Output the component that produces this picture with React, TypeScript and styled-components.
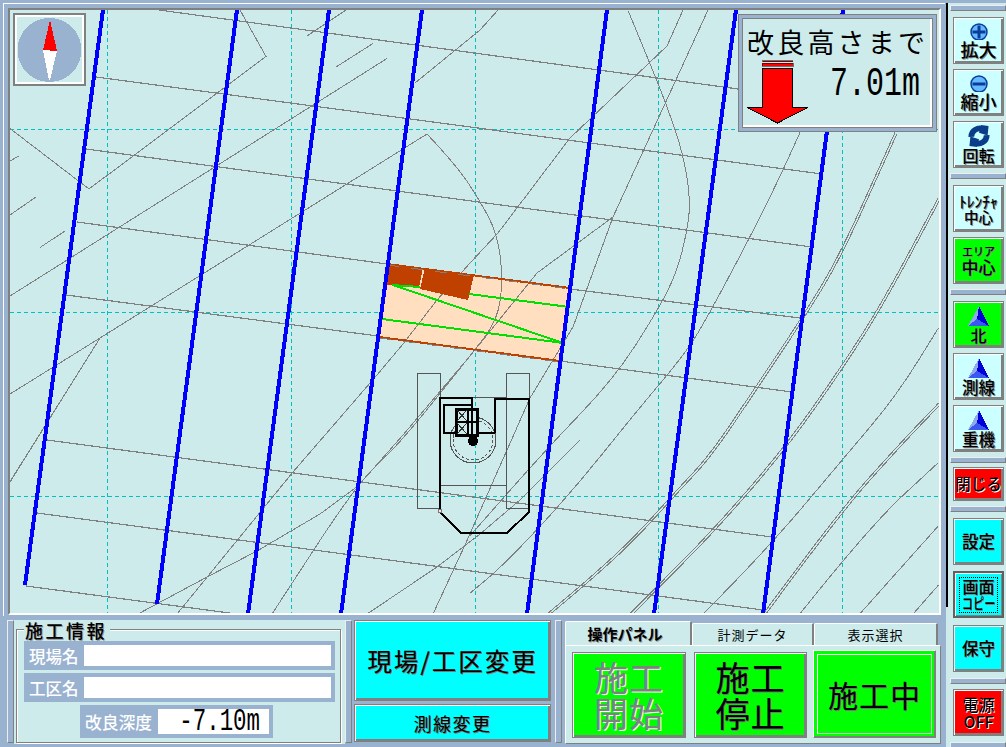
import React from "react";
import styled, { createGlobalStyle, css } from "styled-components";

const BLUE = "#99b2d0";
const PALE = "#cdebeb";
const FONT = `"Noto Sans CJK JP", "Liberation Sans", sans-serif`;

const Global = createGlobalStyle`
  html, body { margin: 0; padding: 0; background: ${BLUE}; overflow: hidden; }
  * { box-sizing: border-box; }
`;

const Page = styled.div`
  width: 1006px; height: 747px; display: flex; font-family: ${FONT}; color: #000;
  background: ${BLUE};
`;
const Main = styled.div`
  width: 946px; height: 747px; display: flex; flex-direction: column; flex: none;
`;
const MapOuter = styled.div`
  width: 942px; height: 613px; margin: 3px 0 0 3px; padding: 4px 0 0 4px;
  border-top: 1px solid #fff; border-left: 1px solid #fff;
`;
const MapWell = styled.div`
  position: relative; width: 933px; height: 607px; background: ${PALE};
  border-top: 2px solid #808080; border-left: 2px solid #808080;
  border-right: 2px solid #fff; border-bottom: 2px solid #fff;
  overflow: hidden;
`;
const MapSvg = styled.svg`display: block;`;

const Compass = styled.div`
  position: absolute; left: 3px; top: 3px; width: 73px; height: 73px;
  border: 2px solid #808080; background: ${PALE};
  box-shadow: inset 2px 2px 0 #fff, inset -2px -2px 0 #fff;
  display: flex; align-items: center; justify-content: center;
`;
const DepthPanel = styled.div`
  position: absolute; left: 728px; top: 4px; width: 199px; height: 118px;
  background: ${PALE}; border: 1px solid #808080;
  box-shadow: inset 0 0 0 3px ${BLUE}, inset 0 0 0 4px #808080, inset -6px -6px 0 0 #fff;
  padding: 10px 0 0 8px;
  display: flex; flex-direction: column;
`;
const DepthTitle = styled.div`
  font-size: 27px; line-height: 34px; letter-spacing: 3.2px; white-space: nowrap; height: 32px;
`;
const DepthRow = styled.div`display: flex; align-items: flex-start; margin-top: 3px;`;
const DepthValue = styled.div`
  font-family: "Liberation Mono", monospace; font-size: 40px; line-height: 40px;
  margin: 5px 0 0 21px; transform: scaleX(0.75); transform-origin: left center; white-space: nowrap;
`;

const Lower = styled.div`
  flex: 1; display: flex; padding-top: 4px; min-height: 0;
`;
const Splitter = styled.div<{ $ml: number }>`
  width: 7px; height: 123px; margin-left: ${(p) => p.$ml}px; flex: none;
  background: ${BLUE}; border-left: 1px solid #eee; border-top: 1px solid #eee;
  border-right: 1px solid #808080; border-bottom: 1px solid #808080;
`;
const InfoPanel = styled.div`
  width: 331px; height: 124px; background: ${PALE}; flex: none; position: relative;
  padding: 9px 2px 1px 2px;
`;
const GroupBox = styled.div`
  position: relative; width: 325px; height: 114px; border: 1px solid #808080;
  box-shadow: inset 1px 1px 0 #fff, 1px 1px 0 #fff;
  padding: 11px 0 0 7px; display: flex; flex-direction: column; gap: 3px;
`;
const Legend = styled.div`
  position: absolute; left: 7px; top: -10px; background: ${PALE}; padding: 0 3px 0 1px;
  font-size: 18px; line-height: 20px; letter-spacing: 2.5px; font-weight: 500;
  text-shadow: 1px 1px 0 #999;
`;
const FieldRow = styled.div`
  width: 311px; height: 29px; background: ${BLUE}; display: flex; align-items: center;
  padding: 0 4px 0 5px;
`;
const FieldLabel = styled.div`
  color: #fff; font-size: 16.5px; line-height: 20px; width: 55px; flex: none; white-space: nowrap;
  font-weight: 500;
`;
const FieldInput = styled.div`flex: 1; height: 21px; background: #fff;`;
const DepthRowBox = styled.div`
  width: 193px; height: 33px; background: ${BLUE}; display: flex; align-items: center;
  margin-left: 56px; padding: 0 4px 0 5px;
`;
const DepthLabel = styled(FieldLabel)`width: 73px; font-size: 16.8px;`;
const DepthInput = styled.div`
  flex: 1; height: 25px; background: #fff; padding-right: 9px;
  display: flex; justify-content: flex-end;
`;
const DepthNumber = styled.div`
  font-family: "Liberation Mono", monospace; font-size: 32px; line-height: 26px; width: 82px;
  display: flex; justify-content: flex-end;
  transform: scaleX(0.7); transform-origin: right center; white-space: nowrap; flex: none;
`;

const RaisedBtn = css`
  border: 1px solid #808080;
  box-shadow: inset 1px 1px 0 #fff, inset -2px -2px 0 #808080;
`;
const MidColumn = styled.div`
  width: 197px; margin-left: 2px; display: flex; flex-direction: column; gap: 3px; flex: none;
`;
const MidButton = styled.div<{ $h: number; $fs: number; $ls: number }>`
  ${RaisedBtn};
  height: ${(p) => p.$h}px; background: #00ffff; font-size: ${(p) => p.$fs}px;
  display: flex; align-items: center; justify-content: center; white-space: nowrap;
  letter-spacing: ${(p) => p.$ls}px; text-shadow: 1px 1px 0 #777;
`;

const TabsPanel = styled.div`
  width: 376px; margin: 1px 0 0 3px; height: 123px; flex: none; display: flex; flex-direction: column;
`;
const TabBar = styled.div`display: flex; height: 24px; flex: none; align-items: flex-end;`;
const Tab = styled.div<{ $w: number; $on?: boolean }>`
  width: ${(p) => p.$w}px; height: ${(p) => (p.$on ? 24 : 22)}px; background: ${PALE};
  border-top: 1px solid #fff; border-left: 1px solid #fff; border-right: 2px solid #808080;
  border-radius: 2px 2px 0 0;
  padding-right: ${(p) => (p.$on ? 6 : 0)}px;
  display: flex; align-items: center; justify-content: center;
  font-size: ${(p) => (p.$on ? 15 : 13)}px; font-weight: ${(p) => (p.$on ? 700 : 400)};
  white-space: nowrap; letter-spacing: ${(p) => (p.$on ? 0 : 1)}px;
  text-shadow: ${(p) => (p.$on ? "1px 1px 0 #999" : "none")};
`;
const TabBody = styled.div`
  flex: 1; background: ${PALE}; border-top: 1px solid #fff; border-left: 1px solid #fff;
  border-right: 1px solid #808080; border-bottom: 1px solid #808080;
  padding: 6px 4px 5px 6px; display: flex; align-items: stretch;
`;
const ActionButton = styled.div<{ $w: number; $ml?: number; $muted?: boolean; $active?: boolean }>`
  position: relative; flex: none;
  width: ${(p) => p.$w}px; margin-left: ${(p) => p.$ml ?? 0}px; background: #00ff00;
  display: flex; align-items: center; justify-content: center; text-align: center;
  ${RaisedBtn};
  font-size: ${(p) => (p.$active ? 30 : 34)}px; line-height: 36px;
  letter-spacing: 1px;
  color: ${(p) => (p.$muted ? "#808080" : "#000")};
  text-shadow: ${(p) => (p.$muted ? "1px 1px 0 #fff" : "1px 1px 0 #777")};
  margin-top: ${(p) => (p.$active ? -2 : 0)}px;
  ${(p) =>
    p.$active &&
    css`
      border-color: #fff #808080 #808080 #fff;
      box-shadow: inset -1px -1px 0 #808080;
      &::after {
        content: ""; position: absolute; inset: 3px; border: 1px solid #fff;
        border-right-color: #c8c8c8; border-bottom-color: #c8c8c8;
      }
    `}
`;

const Sidebar = styled.div`
  position: relative; width: 60px; height: 747px; background: ${PALE}; flex: none;
  padding: 5px 2px 0 7px; display: flex; flex-direction: column;
  &::before { content: ""; position: absolute; left: 0; top: 0; width: 60px; height: 3px; background: ${BLUE}; }
  &::after { content: ""; position: absolute; left: 0; top: 3px; width: 2px; height: 604px; background: #000; }
`;
const SideSep = styled.div<{ $mt: number }>`
  width: 56px; margin-left: -3px; height: 6px; margin-top: ${(p) => p.$mt}px; background: ${BLUE}; flex: none;
  border: 1px solid #808080; border-top-color: #eee; border-left-color: #eee;
`;
const SideBtn = styled.div<{ $bg: string; $mt: number; $h?: number; $focus?: boolean }>`
  ${RaisedBtn};
  position: relative; flex: none; width: 51px; height: ${(p) => p.$h ?? 47}px;
  margin-top: ${(p) => p.$mt}px; background: ${(p) => p.$bg};
  display: flex; flex-direction: column; align-items: center; justify-content: center;
  font-weight: 500; text-shadow: 1px 1px 0 #888; white-space: nowrap; overflow: hidden;
  ${(p) =>
    p.$focus &&
    css`
      border: 2px solid #606060;
      box-shadow: inset 1px 1px 0 #eee, inset -1px -1px 0 #808080;
    `}
`;
const Focus = styled.div`
  border: 1px dotted #000; width: 39px; height: 36px;
  display: flex; flex-direction: column; align-items: center; justify-content: center;
`;
const SideText = styled.div<{ $fs: number; $lh?: number; $mt?: number; $light?: boolean; $sx?: number }>`
  font-size: ${(p) => p.$fs}px; line-height: ${(p) => p.$lh ?? p.$fs}px;
  margin-top: ${(p) => p.$mt ?? 0}px; text-align: center;
  ${(p) => p.$light && "text-shadow: 1px 1px 0 #fff;"}
  ${(p) => p.$sx && `transform: scaleX(${p.$sx});`}
`;
const Icon = styled.svg`display: block; flex: none;`;

type Pt = [number, number];
const gridV = [107, 291, 475, 658, 842];
const gridH = [129, 312, 496];
const blueLines: [number, number, number, number][] = [
  [103, 10, 25, 585], [237, 10, 157, 604], [329, 10, 248, 614], [422, 10, 341, 614],
  [607, 10, 527, 614], [736, 10, 654, 614], [843, 10, 763, 614],
];
const rows: [number, number, number, number][] = [
  [159, 10, 738, 89], [96, 77, 822, 174], [86, 149, 812, 247], [77, 222, 387, 264],
  [570, 289, 800, 318], [66, 295, 378, 336], [560, 361, 792, 392], [47, 440, 772, 537],
  [37, 513, 763, 610], [26, 586, 237, 614],
];
const zl = (a: number[][]): Pt[] => a.map(([x, y]) => [x / 3, y / 2.529]);
const zr = (a: number[][]): Pt[] => a.map(([x, y]) => [470 + x / 3, y / 2.529]);
const shift = (a: Pt[], d: number): Pt[] => a.map(([x, y]) => [x + d, y + d * 0.6]);
const pts = (a: Pt[]) => a.map((p) => p.join(",")).join(" ");
const smooth = (a: Pt[]) => {
  let d = `M${a[0][0]} ${a[0][1]}`;
  for (let i = 1; i < a.length - 1; i++) {
    const mx = (a[i][0] + a[i + 1][0]) / 2;
    const my = (a[i][1] + a[i + 1][1]) / 2;
    d += ` Q${a[i][0]} ${a[i][1]} ${mx} ${my}`;
  }
  const e = a[a.length - 1];
  return d + ` L${e[0]} ${e[1]}`;
};

const r1 = zr([[232,1552],[335,1480],[480,1370],[620,1240],[720,1150],[860,975],[990,810],[1100,660],[1230,420],[1275,335]]);
const r2 = zr([[480,1552],[565,1480],[740,1330],[945,1130],[1120,920],[1240,760],[1405,500]]);
const r4 = zr([[880,1552],[1100,1300],[1280,1130],[1405,1020]]);
const lowArc: Pt[] = [[427, 134], [457, 166], [480, 201], [497, 233], [503, 277], [498, 320], [470, 356], [397, 447], [358, 482], [272, 614]];
const straight: Pt[][] = [
  [[10, 128.5], [89, 189], [266, 56.5], [240, 10]],
  [[10, 296], [387, 58.5]],
  [[10, 394], [100, 338], [427, 134]],
  [[100, 338], [10, 482]],
  [[307, 36], [346, 10]],
  [[336, 67], [373, 43.5]],
  [[10, 215], [36, 197]],
  [[40, 247.5], [65, 231]],
  [[10, 161], [19, 156]],
  [[415, 83], [480, 30], [498, 10]],
  [[177, 614], [293, 472], [377, 375], [403, 344], [437, 300], [470, 263], [498, 233], [570, 138], [667, 46], [683, 10]],
  [[433, 614], [465, 545], [530, 398], [573, 327], [613, 217]],
  [[367, 614], [437, 567], [480, 534], [520, 500], [580, 440]],
  [[138, 614], [207, 577], [257, 551], [320, 514], [358, 486], [403, 435], [470, 356], [537, 273], [613, 217], [708, 10]],
  zr([[1170,1552],[1405,1330]]),
  zr([[1330,1552],[1405,1480]]),
  zl([[30,1218],[300,855]]),
];
const curves: Pt[][] = [
  lowArc,
  zr([[475,28],[530,140],[590,265],[640,390],[662,510],[650,590],[620,690],[560,790],[430,960],[230,1135],[0,1355]]),
  zr([[990,335],[940,430],[840,600],[720,790],[650,890],[500,1040],[300,1250],[100,1430],[0,1500]]),
  r1, shift(r1, 2), r2, shift(r2, 2),
  zr([[700,1552],[880,1400],[1120,1160],[1280,1000],[1405,830]]),
  r4, shift(r4, 2),
  zr([[990,1552],[1200,1330],[1405,1170]]),
];

function MapDrawing() {
  return (
    <MapSvg width={929} height={605} viewBox="10 10 929 605" shapeRendering="crispEdges">
      {gridV.map((x) => (
        <line key={x} x1={x} y1={10} x2={x} y2={614} stroke="#00c0c0" strokeDasharray="4 3" />
      ))}
      {gridH.map((y) => (
        <line key={y} x1={10} y1={y} x2={940} y2={y} stroke="#00c0c0" strokeDasharray="4 3" />
      ))}
      <polygon points="387,264 570,288 560,361 379,337" fill="#ffdfbf" />
      {straight.map((t, i) => (
        <polyline key={i} points={pts(t)} fill="none" stroke="#808080" strokeWidth={1} />
      ))}
      {curves.map((t, i) => (
        <path key={i} d={smooth(t)} fill="none" stroke="#808080" strokeWidth={1} />
      ))}
      {rows.map((r, i) => (
        <line key={i} x1={r[0]} y1={r[1]} x2={r[2]} y2={r[3]} stroke="#808080" strokeWidth={1.2} />
      ))}
      <polygon points="387,264 423,268 419,287 386,285" fill="#c04000" />
      <polygon points="425,268 474,275 468,300 420,289" fill="#c04000" />
      <line x1="387" y1="264" x2="570" y2="288" stroke="#c04000" strokeWidth={2} />
      <line x1="379" y1="337" x2="560" y2="361" stroke="#c04000" strokeWidth={2} />
      <line x1="387" y1="265" x2="570" y2="289" stroke="#808080" strokeWidth={1} strokeDasharray="12 12" />
      <line x1="379" y1="338" x2="560" y2="362" stroke="#808080" strokeWidth={1} strokeDasharray="12 12" />
      <line x1="392" y1="285" x2="420" y2="287" stroke="#00e000" strokeWidth={2} />
      <line x1="469" y1="294" x2="569" y2="307" stroke="#00e000" strokeWidth={2} />
      <polyline points="393,285 563,343" fill="none" stroke="#00e000" strokeWidth={2} />
      <line x1="382" y1="319" x2="563" y2="343" stroke="#00e000" strokeWidth={2} />
      {blueLines.map((l, i) => (
        <line key={i} x1={l[0]} y1={l[1]} x2={l[2]} y2={l[3]} stroke="#0000ff" strokeWidth={4} />
      ))}
      <g fill="none">
        <rect x={417.5} y={373.5} width={23} height={135} stroke="#555" />
        <rect x={506.5} y={373.5} width={23} height={135} stroke="#555" />
        <line x1={440} y1={397} x2={506} y2={397} stroke="#555" />
        <line x1={440} y1={485} x2={506} y2={485} stroke="#555" />
        <circle cx={473} cy={440} r={23} stroke="#555" />
        <circle cx={473} cy={440} r={20} stroke="#555" strokeDasharray="3 2" />
        <polyline points="472,408 472,398 440,398 440,512 461,533 507,533 529,512 529,399 495,399 495,433" stroke="#000" strokeWidth={2} />
        <polyline points="472,405 444,405 444,433 495,433" stroke="#000" strokeWidth={2} />
        <rect x={456} y={409} width={21} height={26} fill="#cdebeb" stroke="#000" strokeWidth={3} />
        <path d="M456 422h21M468 409v26M472 409v26" stroke="#000" strokeWidth={2} />
        <path d="M457 410l10 11M467 410l-10 11M457 423l10 11M467 423l-10 11" stroke="#333" />
      </g>
      <circle cx={473} cy={441} r={5} fill="#000" />
      <circle cx={440} cy={511} r={2} fill="#eee" stroke="#777" />
    </MapSvg>
  );
}

const Needle = () => (
  <Icon width={66} height={66} viewBox="0 0 66 66" shapeRendering="crispEdges">
    <circle cx={32.5} cy={33} r={32} fill={BLUE} />
    <polygon points="33,3 26,33 40,34" fill="#ff0000" />
    <polygon points="26,33 40,34 33,63 32,63" fill="#fff" />
  </Icon>
);
const DownArrow = () => (
  <Icon width={62} height={64} viewBox="0 0 62 64" shapeRendering="crispEdges">
    <rect x={15.5} y={0.5} width={30} height={1} fill="#f00" stroke="#000" strokeWidth={0.5} />
    <rect x={15} y={3} width={31} height={3} fill="#f00" stroke="#000" strokeWidth={0.5} />
    <polygon points="15.5,8.5 45.5,8.5 45.5,47.5 61,47.5 30.5,63 0,47.5 15.5,47.5" fill="#f00" stroke="#000" />
  </Icon>
);
const Lens = ({ minus }: { minus?: boolean }) => (
  <Icon width={20} height={17} viewBox="0 0 20 17">
    <circle cx={10} cy={9} r={8} fill="#66bbff" stroke="#0a3c9a" strokeWidth={1.5} />
    <rect x={3.5} y={7.5} width={13} height={3} fill="#0a3c9a" />
    {!minus && <rect x={8.5} y={2.5} width={3} height={13} fill="#0a3c9a" />}
  </Icon>
);
const Rotate = () => (
  <Icon width={26} height={22} viewBox="0 0 26 23">
    <path d="M5 12.5 A8.5 8.5 0 0 1 18 5" fill="none" stroke="#0a3c8a" strokeWidth={6} />
    <polygon points="15,0 23,1 22,11 13,8" fill="#0a3c8a" />
    <path d="M21 10.5 A8.5 8.5 0 0 1 8 18" fill="none" stroke="#0a3c8a" strokeWidth={6} />
    <polygon points="11,23 3,22 4,12 13,15" fill="#0a3c8a" />
  </Icon>
);
const Pyramid = () => (
  <Icon width={22} height={21} viewBox="0 0 22 21" shapeRendering="crispEdges">
    <polygon points="11,0 0,20 9,13" fill="#8fa8f0" />
    <polygon points="11,0 9,13 21,20" fill="#0000d8" />
    <polygon points="9,13 0,20 21,20" fill="#3858f0" />
  </Icon>
);

export default function App() {
  return (
    <Page>
      <Global />
      <Main>
        <MapOuter>
          <MapWell>
            <MapDrawing />
            <Compass><Needle /></Compass>
            <DepthPanel>
              <DepthTitle>改良高さまで</DepthTitle>
              <DepthRow>
                <DownArrow />
                <DepthValue>7.01m</DepthValue>
              </DepthRow>
            </DepthPanel>
          </MapWell>
        </MapOuter>
        <Lower>
          <Splitter $ml={7} />
          <InfoPanel>
            <GroupBox>
              <Legend>施工情報</Legend>
              <FieldRow><FieldLabel>現場名</FieldLabel><FieldInput /></FieldRow>
              <FieldRow><FieldLabel>工区名</FieldLabel><FieldInput /></FieldRow>
              <DepthRowBox>
                <DepthLabel>改良深度</DepthLabel>
                <DepthInput><DepthNumber>-7.10m</DepthNumber></DepthInput>
              </DepthRowBox>
            </GroupBox>
          </InfoPanel>
          <Splitter $ml={0} />
          <MidColumn>
            <MidButton $h={81} $fs={24.5} $ls={2}>現場/工区変更</MidButton>
            <MidButton $h={38} $fs={18} $ls={1.5}>測線変更</MidButton>
          </MidColumn>
          <Splitter $ml={4} />
          <TabsPanel>
            <TabBar>
              <Tab $w={127} $on>操作パネル</Tab>
              <Tab $w={122}>計測データ</Tab>
              <Tab $w={124}>表示選択</Tab>
            </TabBar>
            <TabBody>
              <ActionButton $w={114} $muted>施工<br />開始</ActionButton>
              <ActionButton $w={113} $ml={8}>施工<br />停止</ActionButton>
              <ActionButton $w={123} $ml={6} $active>施工中</ActionButton>
            </TabBody>
          </TabsPanel>
        </Lower>
      </Main>
      <Sidebar>
        <SideSep $mt={0} />
        <SideBtn $bg="#ccffff" $mt={6}><Lens /><SideText $fs={18} $lh={19}>拡大</SideText></SideBtn>
        <SideBtn $bg="#ccffff" $mt={5}><Lens minus /><SideText $fs={18} $lh={19}>縮小</SideText></SideBtn>
        <SideBtn $bg="#ccffff" $mt={5}><Rotate /><SideText $fs={16} $lh={17}>回転</SideText></SideBtn>
        <SideSep $mt={5} />
        <SideBtn $bg="#ccffff" $mt={6}><SideText $fs={15.5} $lh={16}>ﾄﾚﾝﾁｬ</SideText><SideText $fs={14.5} $lh={15}>中心</SideText></SideBtn>
        <SideBtn $bg="#00ff00" $mt={5}><SideText $fs={11} $lh={13}>エリア</SideText><SideText $fs={17} $lh={18}>中心</SideText></SideBtn>
        <SideSep $mt={5} />
        <SideBtn $bg="#00ff00" $mt={6}><Pyramid /><SideText $fs={16} $lh={17}>北</SideText></SideBtn>
        <SideBtn $bg="#ccffff" $mt={5}><Pyramid /><SideText $fs={16.5} $lh={17}>測線</SideText></SideBtn>
        <SideBtn $bg="#ccffff" $mt={5}><Pyramid /><SideText $fs={16.5} $lh={17}>重機</SideText></SideBtn>
        <SideSep $mt={5} />
        <SideBtn $bg="#ff0000" $mt={4} $h={34}><SideText $fs={15.5} $light>閉じる</SideText></SideBtn>
        <SideSep $mt={5} />
        <SideBtn $bg="#00ffff" $mt={6}><SideText $fs={16.5}>設定</SideText></SideBtn>
        <SideBtn $bg="#00ffff" $mt={6} $focus>
          <Focus><SideText $fs={16} $lh={17}>画面</SideText><SideText $fs={15} $lh={16} $sx={0.75}>コピー</SideText></Focus>
        </SideBtn>
        <SideBtn $bg="#00ffff" $mt={7}><SideText $fs={16.5}>保守</SideText></SideBtn>
        <SideSep $mt={6} />
        <SideBtn $bg="#ff0000" $mt={5}><SideText $fs={16} $lh={18} $light>電源</SideText><SideText $fs={16} $lh={17} $light>OFF</SideText></SideBtn>
        <SideSep $mt={6} />
      </Sidebar>
    </Page>
  );
}
